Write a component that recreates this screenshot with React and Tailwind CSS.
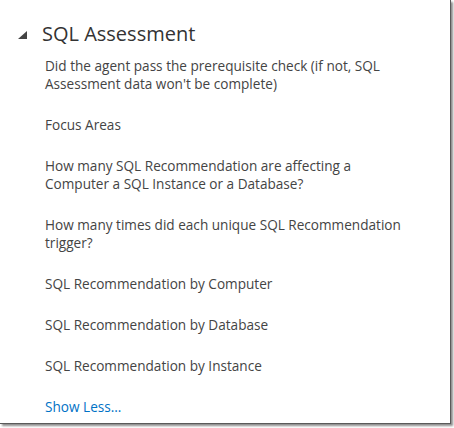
import React from 'react';

const items = [
  "Did the agent pass the prerequisite check (if not, SQL Assessment data won't be complete)",
  'Focus Areas',
  'How many SQL Recommendation are affecting a Computer a SQL Instance or a Database?',
  'How many times did each unique SQL Recommendation trigger?',
  'SQL Recommendation by Computer',
  'SQL Recommendation by Database',
  'SQL Recommendation by Instance',
];

const App = () => {
  return (
    <div className="w-[454px] h-[428px] bg-white" style={{ fontFamily: '"Open Sans", "Noto Sans", sans-serif' }}>
      <div className="w-[451px] h-[424px] bg-white border-r border-b border-[#5a5a5a] shadow-[2px_2px_2px_rgba(0,0,0,0.45)]">
        {/* Header */}
        <div className="flex items-center pt-[21px] pl-[18px]">
          <svg width="9" height="8" viewBox="0 0 9 8" className="mt-[2px]">
            <polygon points="9,0 9,8 0,8" fill="#444" />
          </svg>
          <h2 className="ml-[15px] text-[20px] leading-[26px] text-[#333]">SQL Assessment</h2>
        </div>

        {/* Links */}
        <ul className="pl-[45px] pr-[40px] mt-[10px] flex flex-col gap-[23px] text-[13.6px] leading-[18px] text-[#444]">
          {items.map((t) => (
            <li key={t}>{t}</li>
          ))}
          <li className="text-[#0072c6]">Show Less...</li>
        </ul>
      </div>
    </div>
  );
};

export default App;
